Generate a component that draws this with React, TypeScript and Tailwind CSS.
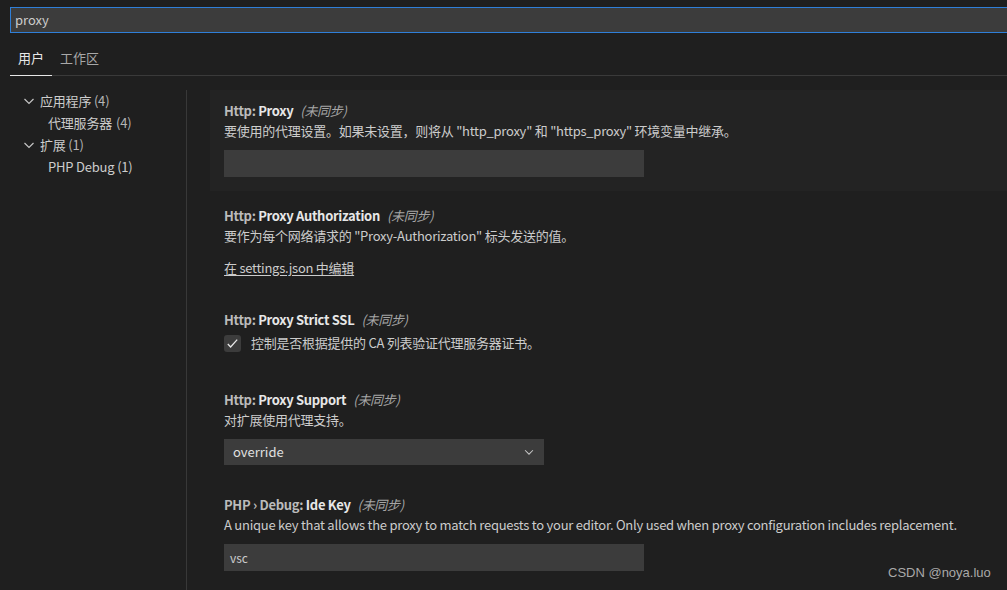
import { ReactNode } from "react";

const font = "font-['Noto_Sans_CJK_SC','Noto_Sans',sans-serif]";

function Chevron({ className }: { className?: string }) {
  return (
    <svg viewBox="0 0 16 16" className={className} fill="none" stroke="currentColor" strokeWidth="1.2">
      <path d="M3.5 6l4.5 4.5L12.5 6" />
    </svg>
  );
}

function Title({ prefix, name }: { prefix: string; name: string }) {
  return (
    <div className="h-5 leading-5 text-[13px] tracking-[-0.3px]">
      <span className="font-semibold text-[#bbbbbb]">{prefix}</span>
      <span className="font-bold text-[#e7e7e7]">{name}</span>
      <span className="ml-[7px] italic text-[#a6a6a6]">(未同步)</span>
    </div>
  );
}

function Desc({ children }: { children: ReactNode }) {
  return <div className="h-5 leading-5 text-[13px] tracking-[-0.25px] text-[#cccccc]">{children}</div>;
}

export default function App() {
  return (
    <div className={`w-[1007px] h-[590px] overflow-hidden bg-[#1f1f1f] text-[#cccccc] ${font}`}>
      {/* search */}
      <div className="pt-[7px] pl-[10px]">
        <div className="h-[26px] w-[1010px] border border-[#2f7fd8] bg-[#3c3c3c] pl-[4px] text-[13px] leading-[24px] text-[#cccccc]">
          proxy
        </div>
      </div>

      {/* tabs */}
      <div className="ml-[10px] mt-[14px] flex h-[29px] border-b border-[#3a3a3a] text-[13px]">
        <div className="relative w-[42px] pl-[8px] leading-[22px] text-[#e7e7e7]">
          用户
          <div className="absolute bottom-[-1px] left-0 h-[1px] w-[42px] bg-[#e7e7e7]" />
        </div>
        <div className="pl-[8px] leading-[22px] text-[#a8a8a8]">工作区</div>
      </div>

      <div className="mt-[14px] flex">
        {/* tree */}
        <div className="w-[186px] shrink-0 pl-[21px] text-[13px] tracking-[-0.2px] text-[#cccccc]">
          <div className="flex h-[22px] items-center">
            <Chevron className="h-[16px] w-[16px] text-[#c5c5c5]" />
            <span className="ml-[3px]">应用程序 <span className="text-[#b5b5b5]">(4)</span></span>
          </div>
          <div className="flex h-[22px] items-center pl-[27px]">
            代理服务器 <span className="ml-[4px] text-[#b5b5b5]">(4)</span>
          </div>
          <div className="flex h-[22px] items-center">
            <Chevron className="h-[16px] w-[16px] text-[#c5c5c5]" />
            <span className="ml-[3px]">扩展 <span className="text-[#b5b5b5]">(1)</span></span>
          </div>
          <div className="flex h-[22px] items-center pl-[27px]">PHP Debug (1)</div>
        </div>

        <div className="h-[500px] w-[1px] shrink-0 bg-[#383838]" />

        {/* settings */}
        <div className="ml-[23px] flex-1">
          <div className="bg-[#232323] px-[14px] pt-[11px] pb-[14px]">
            <Title prefix="Http: " name="Proxy" />
            <Desc>要使用的代理设置。如果未设置，则将从 "http_proxy" 和 "https_proxy" 环境变量中继承。</Desc>
            <div className="mt-[9px] h-[27px] w-[420px] bg-[#3c3c3c]" />
          </div>

          <div className="px-[14px] pt-[15px]">
            <Title prefix="Http: " name="Proxy Authorization" />
            <Desc>要作为每个网络请求的 "Proxy-Authorization" 标头发送的值。</Desc>
            <div className="mt-[12px] h-5 leading-5 text-[13px] tracking-[-0.25px] text-[#cccccc] underline underline-offset-2">
              在 settings.json 中编辑
            </div>
          </div>

          <div className="px-[14px] pt-[32px]">
            <Title prefix="Http: " name="Proxy Strict SSL" />
            <div className="mt-[3px] flex items-center">
              <div className="flex h-[17px] w-[17px] items-center justify-center rounded-[3px] bg-[#3c3c3c]">
                <svg viewBox="0 0 16 16" className="h-[15px] w-[15px]" fill="none" stroke="#e8e8e8" strokeWidth="1.4">
                  <path d="M3 8.5l3 3.2L13 3.8" />
                </svg>
              </div>
              <span className="ml-[10px] text-[13px] leading-5 tracking-[-0.25px] text-[#cccccc]">控制是否根据提供的 CA 列表验证代理服务器证书。</span>
            </div>
          </div>

          <div className="px-[14px] pt-[37px]">
            <Title prefix="Http: " name="Proxy Support" />
            <Desc>对扩展使用代理支持。</Desc>
            <div className="mt-[9px] flex h-[26px] w-[320px] items-center justify-between bg-[#3c3c3c] pl-[9px] pr-[8px] text-[13px] text-[#e0e0e0]">
              <span>override</span>
              <Chevron className="h-[14px] w-[14px] text-[#c5c5c5]" />
            </div>
          </div>

          <div className="px-[14px] pt-[30px]">
            <Title prefix="PHP › Debug: " name="Ide Key" />
            <Desc>A unique key that allows the proxy to match requests to your editor. Only used when proxy configuration includes replacement.</Desc>
            <div className="mt-[9px] flex h-[27px] w-[420px] items-center justify-between bg-[#3c3c3c] pl-[6px] text-[12px] text-[#cccccc]">
              <span>vsc</span>
            </div>
          </div>
        </div>
      </div>

      <div className="absolute left-[888px] top-[563px] font-['Liberation_Sans',sans-serif] text-[13px] text-[#a9a9a9]">
        CSDN @noya.luo
      </div>
    </div>
  );
}
